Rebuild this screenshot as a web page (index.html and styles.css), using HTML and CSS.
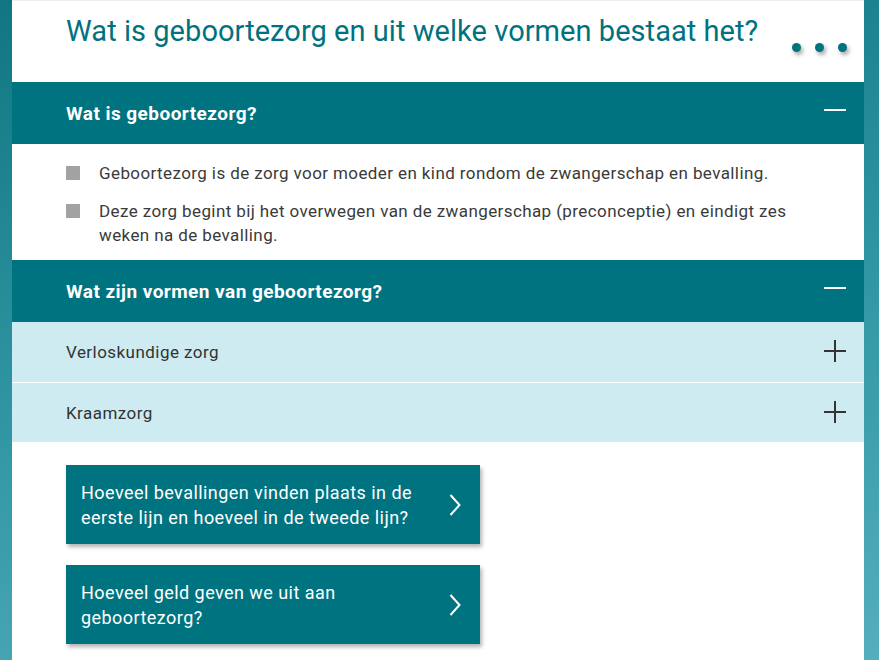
FILE: index.html
```html
<!DOCTYPE html>
<html lang="nl">
<head>
<meta charset="utf-8">
<title>Geboortezorg</title>
<link rel="stylesheet" href="styles.css">
</head>
<body>
<main class="panel">
  <header class="page-head">
    <h1 class="page-title">Wat is geboortezorg en uit welke vormen bestaat het?</h1>
    <button class="dots" aria-label="Menu"><span></span><span></span><span></span></button>
  </header>

  <section class="acc">
    <div class="acc-head">
      <h2>Wat is geboortezorg?</h2>
      <span class="minus"></span>
    </div>
    <ul class="bullets">
      <li>Geboortezorg is de zorg voor moeder en kind rondom de zwangerschap en bevalling.</li>
      <li>Deze zorg begint bij het overwegen van de zwangerschap (preconceptie) en eindigt zes weken na de bevalling.</li>
    </ul>
  </section>

  <section class="acc">
    <div class="acc-head">
      <h2>Wat zijn vormen van geboortezorg?</h2>
      <span class="minus"></span>
    </div>
    <div class="sub-row">
      <span>Verloskundige zorg</span>
      <span class="plus"></span>
    </div>
    <div class="sub-row">
      <span>Kraamzorg</span>
      <span class="plus"></span>
    </div>
  </section>

  <nav class="links">
    <a class="link-card" href="#">
      <span>Hoeveel bevallingen vinden plaats in de eerste lijn en hoeveel in de tweede lijn?</span>
      <svg class="chev" width="12" height="22" viewBox="0 0 12 22"><path d="M1.5 1 L10.5 11 L1.5 21" fill="none" stroke="#fff" stroke-width="2"/></svg>
    </a>
    <a class="link-card" href="#">
      <span>Hoeveel geld geven we uit aan geboortezorg?</span>
      <svg class="chev" width="12" height="22" viewBox="0 0 12 22"><path d="M1.5 1 L10.5 11 L1.5 21" fill="none" stroke="#fff" stroke-width="2"/></svg>
    </a>
  </nav>
</main>
</body>
</html>
```

FILE: styles.css
```css
* { box-sizing: border-box; }
html, body { margin: 0; padding: 0; }
body {
  min-height: 660px;
  background: linear-gradient(170deg, #0f7682 0%, #2f95a2 50%, #55aebb 100%);
  font-family: "Roboto", "Liberation Sans", sans-serif;
  padding: 0 15px 0 12px;
}
.panel {
  background: #fff;
  min-height: 660px;
  border-top: 1px solid #eeeeee;
}
.page-head {
  height: 81px;
  display: flex;
  align-items: flex-start;
  justify-content: space-between;
  padding: 13px 17px 0 54px;
}
.page-title {
  margin: 0;
  font-size: 29px;
  line-height: 34px;
  font-weight: 400;
  color: #00727f;
  letter-spacing: 0.05px;
}
.dots {
  display: flex;
  gap: 14px;
  border: 0;
  background: none;
  padding: 0;
  margin-top: 29px;
}
.dots span {
  width: 9px;
  height: 9px;
  border-radius: 50%;
  background: #007381;
  box-shadow: 2px 3px 4px rgba(0,0,0,0.35);
}
.acc-head {
  height: 62px;
  background: #007381;
  display: flex;
  align-items: center;
  justify-content: space-between;
  padding: 0 18px 0 54px;
}
.acc-head h2 {
  margin: 0;
  color: #fff;
  font-size: 19px;
  font-weight: 700;
  letter-spacing: 0.45px;
}
.minus {
  width: 22px;
  height: 2px;
  background: #fff;
  margin-top: -6px;
}
.bullets {
  list-style: none;
  margin: 0;
  padding: 17px 40px 13px 54px;
}
.bullets li {
  position: relative;
  padding-left: 33px;
  font-size: 17px;
  line-height: 24px;
  color: #3a3a3a;
  letter-spacing: 0.4px;
  margin-bottom: 14px;
}
.bullets li:last-child { margin-bottom: 0; }
.bullets li::before {
  content: "";
  position: absolute;
  left: 0;
  top: 5px;
  width: 14px;
  height: 14px;
  background: #a2a2a2;
}
.sub-row {
  height: 60px;
  background: #cdebf0;
  border-top: 1px solid #fff;
  display: flex;
  align-items: center;
  justify-content: space-between;
  padding: 0 18px 0 54px;
  font-size: 17px;
  color: #333;
  letter-spacing: 0.45px;
}
.acc-head + .sub-row { border-top: 0; }
.plus {
  position: relative;
  width: 22px;
  height: 22px;
  margin-top: -2px;
}
.plus::before, .plus::after {
  content: "";
  position: absolute;
  background: #333;
}
.plus::before { left: 0; top: 10px; width: 22px; height: 2px; }
.plus::after { left: 10px; top: 0; width: 2px; height: 22px; }
.links {
  padding: 23px 0 20px 54px;
  display: flex;
  flex-direction: column;
  gap: 21px;
}
.link-card {
  width: 414px;
  height: 79px;
  background: #007381;
  color: #fff;
  text-decoration: none;
  display: flex;
  align-items: center;
  justify-content: space-between;
  padding: 0 19px 0 15px;
  font-size: 18px;
  line-height: 25px;
  letter-spacing: 0.45px;
  box-shadow: 2px 3px 4px rgba(0,0,0,0.3);
}
.link-card span { max-width: 350px; }
.chev { flex: none; }
```
